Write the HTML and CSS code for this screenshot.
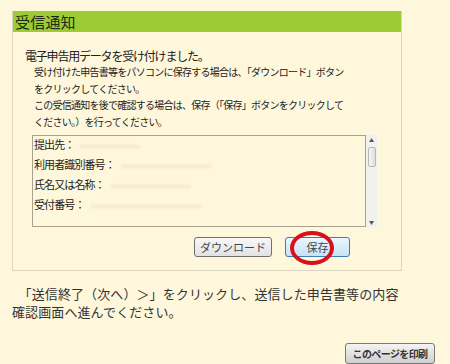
FILE: index.html
```html
<!DOCTYPE html>
<html lang="ja">
<head>
  <meta charset="UTF-8">
  <title>受信通知</title>
  <link rel="stylesheet" href="styles.css">
</head>
<body>
  <div class="panel">
    <div class="panel-title">受信通知</div>
    <div class="panel-body">
      <p class="lead">電子申告用データを受け付けました。</p>
      <p class="note">受け付けた申告書等をパソコンに保存する場合は、「ダウンロード」ボタン<br>をクリックしてください。</p>
      <p class="note">この受信通知を後で確認する場合は、保存（「保存」ボタンをクリックして<br>ください。）を行ってください。</p>

      <div class="receipt">
        <div class="receipt-text">
          <div class="row">提出先：<span class="blur w1"></span></div>
          <div class="row">利用者識別番号：<span class="blur w2"></span></div>
          <div class="row">氏名又は名称：<span class="blur w3"></span></div>
          <div class="row">受付番号：<span class="blur w4"></span></div>
        </div>
        <div class="scrollbar">
          <span class="arrow">&#9650;</span>
          <span class="thumb"></span>
          <span class="arrow down">&#9660;</span>
        </div>
      </div>

      <div class="actions">
        <button class="btn">ダウンロード</button>
        <button class="btn btn-save">保存<span class="mark"></span></button>
      </div>
    </div>
  </div>

  <p class="next">&#12288;「送信終了（次へ）＞」をクリックし、送信した申告書等の内容<br>確認画面へ進んでください。</p>

  <div class="print-row">
    <button class="btn-print">このページを印刷</button>
  </div>
</body>
</html>
```

FILE: styles.css
```css
body {
  margin: 0;
  padding: 11px 12px 0;
  background: #fef7dc;
  font-family: "Noto Sans CJK JP", sans-serif;
  color: #222;
}
p {
  margin: 0;
}
.panel {
  width: 388px;
  border: 1px solid #dcd6c0;
  border-top: none;
}
.panel-title {
  background: #9ccc35;
  height: 21px;
  line-height: 21px;
  padding-left: 2px;
  font-size: 15px;
  letter-spacing: 0.2px;
  color: #1e2a10;
}
.panel-body {
  padding: 16px 0 13px 12px;
}
.lead {
  font-size: 12px;
  line-height: 16px;
  letter-spacing: -1.2px;
}
.note {
  padding-left: 9px;
  font-size: 10px;
  line-height: 16.5px;
  letter-spacing: -0.75px;
}
.receipt {
  display: flex;
  margin: 5px 0 0 7px;
  width: 345px;
  height: 92px;
}
.receipt-text {
  flex: 1;
  border: 1px solid #a8a290;
  overflow: hidden;
  font-size: 11px;
  letter-spacing: -0.9px;
  line-height: 20px;
}
.row {
  position: relative;
  top: -2px;
  padding-left: 1px;
  white-space: nowrap;
}
.blur {
  display: inline-block;
  height: 3px;
  margin-left: 6px;
  vertical-align: middle;
  background: #f1ead0;
  filter: blur(1px);
}
.w1 { width: 60px; }
.w2 { width: 90px; }
.w3 { width: 80px; }
.w4 { width: 110px; }
.scrollbar {
  width: 11px;
  background: #f1f1ef;
  display: flex;
  flex-direction: column;
  align-items: center;
  font-size: 5px;
  color: #555;
}
.arrow {
  height: 10px;
  line-height: 10px;
}
.arrow.down {
  margin-top: auto;
}
.thumb {
  width: 8px;
  height: 20px;
  margin-top: 2px;
  border: 1px solid #b8b8b8;
  border-radius: 2px;
  box-sizing: border-box;
  background: linear-gradient(to right, #f6f6f6, #dedede);
}
.actions {
  display: flex;
  gap: 13px;
  margin: 10px 0 0 169px;
}
.btn {
  position: relative;
  height: 20px;
  padding: 0;
  width: 78px;
  border: 1px solid #707070;
  border-radius: 3px;
  background: linear-gradient(#f8f8f8, #e2e2e2);
  font-family: inherit;
  font-size: 11px;
  color: #444;
}
.btn-save {
  width: 65px;
  border-color: #3c7fb1;
  background: linear-gradient(#eaf6fd, #c6e3f6);
}
.mark {
  position: absolute;
  left: 4px;
  top: -7px;
  width: 36px;
  height: 26px;
  border: 4px solid #d8101c;
  border-radius: 50%;
}
.next {
  margin-top: 14px;
  font-size: 13px;
  line-height: 18px;
  letter-spacing: 0.1px;
  color: #333;
  white-space: nowrap;
}
.print-row {
  display: flex;
  justify-content: flex-end;
  margin: 22px 3px 0 0;
}
.btn-print {
  width: 90px;
  height: 21px;
  padding: 0;
  border: 1px solid #7a7a7a;
  border-radius: 3px;
  background: linear-gradient(#f4f4f4, #cfcfcf);
  font-family: inherit;
  font-size: 10px;
  font-weight: bold;
  color: #333;
  letter-spacing: -0.6px;
}
```
